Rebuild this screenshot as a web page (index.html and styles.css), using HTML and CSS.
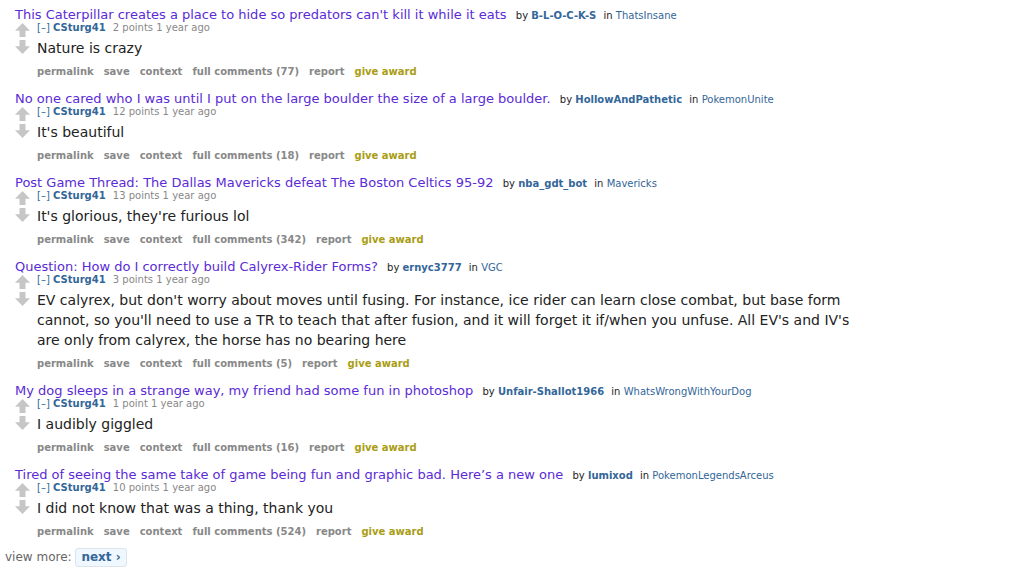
FILE: index.html
```html
<!DOCTYPE html>
<html lang="en">
<head>
    <meta charset="UTF-8">
    <title>overview for CSturg41</title>
    <link rel="stylesheet" href="styles.css">
</head>
<body>
<div id="siteTable" class="listing">

    <div class="thing">
        <p class="parent">
            <a class="title" href="#">This Caterpillar creates a place to hide so predators can't kill it while it eats</a>
            <span class="by">by</span> <a class="author" href="#">B-L-O-C-K-S</a>
            <span class="by">in</span> <a class="subreddit" href="#">ThatsInsane</a>
        </p>
        <div class="comment">
            <div class="midcol">
                <div class="arrow up"></div>
                <div class="arrow down"></div>
            </div>
            <div class="entry">
                <p class="tagline"><span class="expand">[–]</span> <a class="author" href="#">CSturg41</a> <span class="score">2 points 1 year ago</span></p>
                <div class="md">Nature is crazy</div>
                <ul class="buttons">
                    <li>permalink</li><li>save</li><li>context</li><li>full comments (77)</li><li>report</li><li class="award">give award</li>
                </ul>
            </div>
        </div>
    </div>

    <div class="thing">
        <p class="parent">
            <a class="title" href="#">No one cared who I was until I put on the large boulder the size of a large boulder.</a>
            <span class="by">by</span> <a class="author" href="#">HollowAndPathetic</a>
            <span class="by">in</span> <a class="subreddit" href="#">PokemonUnite</a>
        </p>
        <div class="comment">
            <div class="midcol">
                <div class="arrow up"></div>
                <div class="arrow down"></div>
            </div>
            <div class="entry">
                <p class="tagline"><span class="expand">[–]</span> <a class="author" href="#">CSturg41</a> <span class="score">12 points 1 year ago</span></p>
                <div class="md">It's beautiful</div>
                <ul class="buttons">
                    <li>permalink</li><li>save</li><li>context</li><li>full comments (18)</li><li>report</li><li class="award">give award</li>
                </ul>
            </div>
        </div>
    </div>

    <div class="thing">
        <p class="parent">
            <a class="title" href="#">Post Game Thread: The Dallas Mavericks defeat The Boston Celtics 95-92</a>
            <span class="by">by</span> <a class="author" href="#">nba_gdt_bot</a>
            <span class="by">in</span> <a class="subreddit" href="#">Mavericks</a>
        </p>
        <div class="comment">
            <div class="midcol">
                <div class="arrow up"></div>
                <div class="arrow down"></div>
            </div>
            <div class="entry">
                <p class="tagline"><span class="expand">[–]</span> <a class="author" href="#">CSturg41</a> <span class="score">13 points 1 year ago</span></p>
                <div class="md">It's glorious, they're furious lol</div>
                <ul class="buttons">
                    <li>permalink</li><li>save</li><li>context</li><li>full comments (342)</li><li>report</li><li class="award">give award</li>
                </ul>
            </div>
        </div>
    </div>

    <div class="thing">
        <p class="parent">
            <a class="title" href="#">Question: How do I correctly build Calyrex-Rider Forms?</a>
            <span class="by">by</span> <a class="author" href="#">ernyc3777</a>
            <span class="by">in</span> <a class="subreddit" href="#">VGC</a>
        </p>
        <div class="comment">
            <div class="midcol">
                <div class="arrow up"></div>
                <div class="arrow down"></div>
            </div>
            <div class="entry">
                <p class="tagline"><span class="expand">[–]</span> <a class="author" href="#">CSturg41</a> <span class="score">3 points 1 year ago</span></p>
                <div class="md">EV calyrex, but don't worry about moves until fusing. For instance, ice rider can learn close combat, but base form cannot, so you'll need to use a TR to teach that after fusion, and it will forget it if/when you unfuse. All EV's and IV's are only from calyrex, the horse has no bearing here</div>
                <ul class="buttons">
                    <li>permalink</li><li>save</li><li>context</li><li>full comments (5)</li><li>report</li><li class="award">give award</li>
                </ul>
            </div>
        </div>
    </div>

    <div class="thing">
        <p class="parent">
            <a class="title" href="#">My dog sleeps in a strange way, my friend had some fun in photoshop</a>
            <span class="by">by</span> <a class="author" href="#">Unfair-Shallot1966</a>
            <span class="by">in</span> <a class="subreddit" href="#">WhatsWrongWithYourDog</a>
        </p>
        <div class="comment">
            <div class="midcol">
                <div class="arrow up"></div>
                <div class="arrow down"></div>
            </div>
            <div class="entry">
                <p class="tagline"><span class="expand">[–]</span> <a class="author" href="#">CSturg41</a> <span class="score">1 point 1 year ago</span></p>
                <div class="md">I audibly giggled</div>
                <ul class="buttons">
                    <li>permalink</li><li>save</li><li>context</li><li>full comments (16)</li><li>report</li><li class="award">give award</li>
                </ul>
            </div>
        </div>
    </div>

    <div class="thing">
        <p class="parent">
            <a class="title" href="#">Tired of seeing the same take of game being fun and graphic bad. Here’s a new one</a>
            <span class="by">by</span> <a class="author" href="#">lumixod</a>
            <span class="by">in</span> <a class="subreddit" href="#">PokemonLegendsArceus</a>
        </p>
        <div class="comment">
            <div class="midcol">
                <div class="arrow up"></div>
                <div class="arrow down"></div>
            </div>
            <div class="entry">
                <p class="tagline"><span class="expand">[–]</span> <a class="author" href="#">CSturg41</a> <span class="score">10 points 1 year ago</span></p>
                <div class="md">I did not know that was a thing, thank you</div>
                <ul class="buttons">
                    <li>permalink</li><li>save</li><li>context</li><li>full comments (524)</li><li>report</li><li class="award">give award</li>
                </ul>
            </div>
        </div>
    </div>

    <div class="nav-buttons">
        view more: <a class="next" href="#">next ›</a>
    </div>
</div>
</body>
</html>
```

FILE: styles.css
```css
body {
    margin: 0;
    background: #fff;
    color: #222;
    font-family: "DejaVu Sans", Verdana, sans-serif;
    font-size: 10px;
}

a {
    text-decoration: none;
}

.listing {
    padding-top: 7px;
}

.thing {
    padding-left: 15px;
    margin-bottom: 11px;
}

.parent {
    margin: 0;
    height: 14px;
    line-height: 16px;
    white-space: nowrap;
}

.title {
    font-size: 13px;
    color: #5a2bd6;
    margin-right: 6px;
}

.by {
    color: #222;
    font-size: 10px;
}

.parent .author {
    font-weight: bold;
    color: #336699;
    margin-right: 4px;
    font-size: 10px;
}

.subreddit {
    color: #336699;
    font-size: 10px;
}

.comment {
    display: flex;
}

.midcol {
    width: 22px;
    display: flex;
    flex-direction: column;
    padding-top: 2px;
}

.arrow {
    width: 15px;
    height: 14px;
    margin-bottom: 3px;
    background: #c6c6c6;
}

.arrow.up {
    clip-path: polygon(50% 0, 100% 55%, 70% 55%, 70% 100%, 30% 100%, 30% 55%, 0 55%);
}

.arrow.down {
    clip-path: polygon(30% 0, 70% 0, 70% 45%, 100% 45%, 50% 100%, 0 45%, 30% 45%);
}

.entry {
    flex: 1;
}

.tagline {
    margin: 0;
    height: 13px;
    line-height: 13px;
    font-size: 10px;
}

.expand {
    color: #336699;
}

.tagline .author {
    color: #336699;
    font-weight: bold;
    margin-right: 4px;
}

.score {
    color: #888;
}

.md {
    font-size: 14px;
    line-height: 20px;
    margin-top: 4px;
    max-width: 830px;
    color: #222;
}

.buttons {
    list-style: none;
    margin: 0;
    padding: 6px 0 0;
    display: flex;
    height: 16px;
    line-height: 16px;
}

.buttons li {
    font-weight: bold;
    color: #888;
    padding-right: 10px;
}

.buttons li.award {
    color: #a99d13;
}

.nav-buttons {
    padding-left: 5px;
    margin-top: -3px;
    font-size: 12px;
    color: #666;
}

.next {
    display: inline-block;
    background: #eff7ff;
    border: 1px solid #dde3ea;
    border-radius: 3px;
    padding: 1px 5px;
    line-height: 15px;
    color: #336699;
    font-weight: bold;
    font-size: 12px;
}
```
